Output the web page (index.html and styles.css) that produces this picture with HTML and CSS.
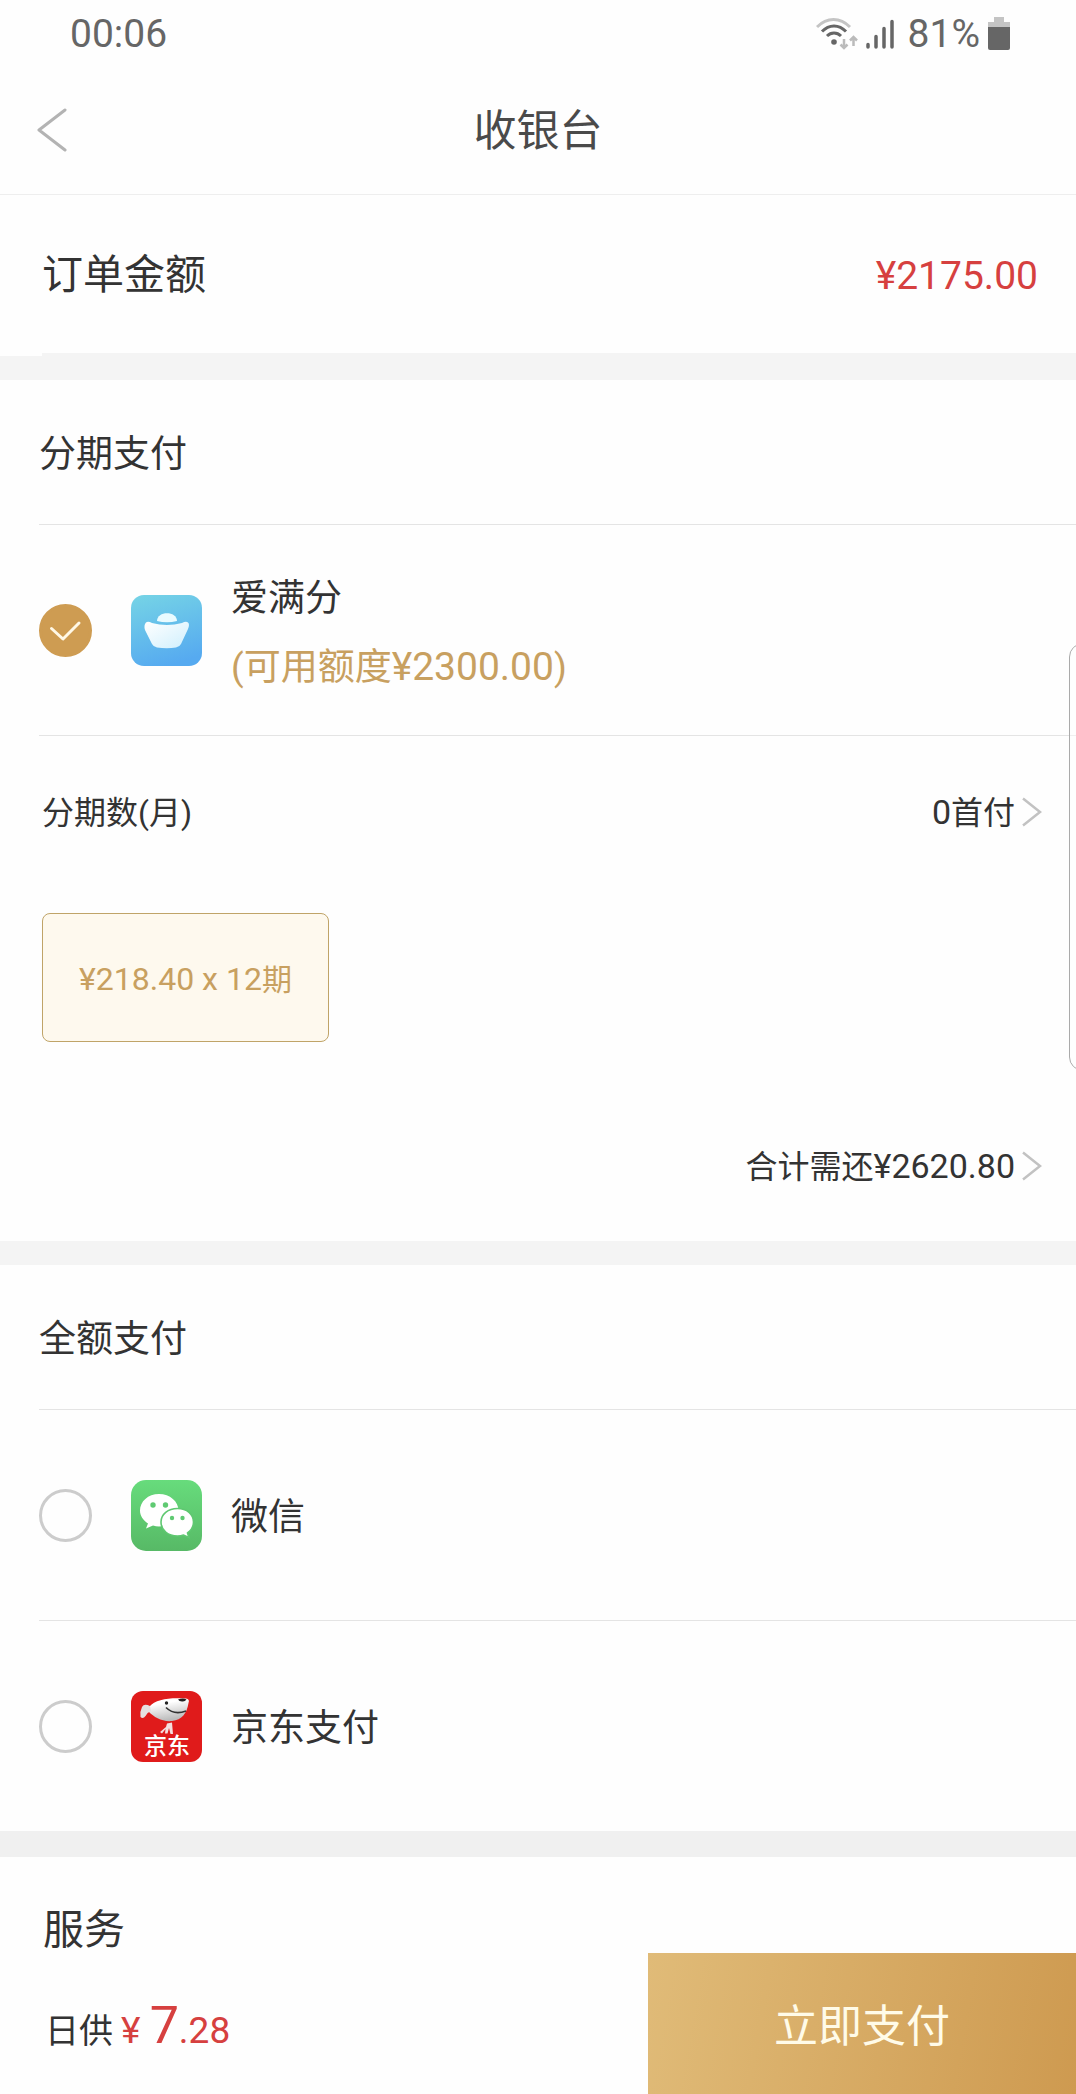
FILE: index.html
```html
<!DOCTYPE html>
<html lang="zh-CN">
<head>
  <meta charset="utf-8">
  <meta name="viewport" content="width=device-width, initial-scale=1">
  <title>收银台</title>
  <link rel="stylesheet" href="styles.css">
</head>
<body>
  <div class="page">
    <!-- Status Bar -->
    <div class="status-bar">
      <span>00:06</span>
      <div class="status-icons">
        <svg width="42" height="34" viewBox="0 0 42 34" fill="none" stroke="#666" stroke-width="3">
          <path d="M1 10C11 0 24 0 34 10" stroke="#c4c4c4"/>
          <path d="M6 14.500C13 7 23 7 30 14.500"/>
          <path d="M11 19C15 15 21 15 25 19"/>
          <circle cx="18" cy="25" r="2.800" fill="#666" stroke="none"/>
          <path d="M28 22V31M24.500 27.500L28 31L31.500 27.500M37.500 29V20M34 23.500L37.500 20L41 23.500" stroke="#bbb" stroke-width="2.500"/>
        </svg>
        <svg class="signal-icon" width="28" height="34" viewBox="0 0 28 34" stroke="#666" stroke-width="3.500" stroke-linecap="round">
          <path d="M2 27.500V30M10 19.500V30M18 11.500V30M26 4.500V30"/>
        </svg>
        <span>81%</span>
        <svg class="battery-icon" width="22" height="34" viewBox="0 0 22 34">
          <path d="M6 0H16V5H22V11H0V5H6Z" fill="#c4c4c4"/>
          <path d="M0 10H22V31Q22 33 20 33H2Q0 33 0 31Z" fill="#666"/>
        </svg>
      </div>
    </div>

    <!-- Header -->
    <header class="header">
      <button class="back-btn" type="button" aria-label="返回">
        <svg width="30" height="44" viewBox="0 0 30 44" fill="none" stroke="#b3b3b3" stroke-width="3" stroke-linecap="round" stroke-linejoin="round">
          <path d="M28 2L2 22L28 42"/>
        </svg>
      </button>
      <h1>收银台</h1>
    </header>

    <!-- Order Amount -->
    <section class="order">
      <div class="order-row">
        <span class="order-label">订单金额</span>
        <span class="order-amount">¥2175.00</span>
      </div>
    </section>

    <!-- Installment Payment -->
    <section class="card">
      <h2>分期支付</h2>
      <label class="pay-row">
        <span class="radio">
          <input type="radio" name="pay" checked>
          <svg viewBox="0 0 53 53" fill="none" stroke="#fff8e6" stroke-width="3" stroke-linecap="round" stroke-linejoin="round">
            <path d="M12.500 24.500L24 35L40 19"/>
          </svg>
        </span>
        <svg class="pay-icon" viewBox="0 0 71 71">
          <defs>
            <linearGradient id="sky" x1="0.200" y1="0" x2="0.500" y2="1">
              <stop offset="0" stop-color="#74d2e6"/>
              <stop offset="1" stop-color="#56aaf0"/>
            </linearGradient>
            <linearGradient id="ingot" x1="0" y1="0" x2="1" y2="1">
              <stop offset="0" stop-color="#fff"/>
              <stop offset="1" stop-color="#cfeffd"/>
            </linearGradient>
          </defs>
          <rect width="71" height="71" rx="13" fill="url(#sky)"/>
          <path d="M26 26C26 15.500 46 15.500 46 26Q36 28.500 26 26Z" fill="#e9fbff"/>
          <path d="M15 27.500Q17 26 21 28Q36 32 51 28Q55 26 57 27.500Q59 29 57 34L50 49Q48.500 52 45 52.500Q36 54 26 52.500Q22.500 52 21 49L14 35Q12.500 30 15 27.500Z" fill="url(#ingot)"/>
        </svg>
        <span class="pay-text">
          <span>爱满分</span>
          <span class="quota">(可用额度<span class="num">¥2300.00</span>)</span>
        </span>
      </label>

      <div class="plan">
        <div class="plan-row">
          <span class="plan-text">分期数(月)</span>
          <button class="link-btn" type="button">
            <span class="plan-text"><span class="num">0</span>首付</span>
            <svg width="20" height="30" viewBox="0 0 20 30" fill="none" stroke="#c2c2c2" stroke-width="2.500">
              <path d="M1 1.500L18 15L1 28.500"/>
            </svg>
          </button>
        </div>
        <button class="plan-option" type="button"><span class="num">¥218.40 x 12</span>期</button>
        <div class="plan-row plan-total">
          <button class="link-btn" type="button">
            <span class="plan-text">合计需还<span class="num">¥2620.80</span></span>
            <svg width="20" height="30" viewBox="0 0 20 30" fill="none" stroke="#c2c2c2" stroke-width="2.500">
              <path d="M1 1.500L18 15L1 28.500"/>
            </svg>
          </button>
        </div>
      </div>
    </section>

    <!-- Full Payment -->
    <section class="card card-full">
      <h2>全额支付</h2>
      <label class="pay-row">
        <span class="radio"><input type="radio" name="pay"></span>
        <svg class="pay-icon" viewBox="0 0 71 71">
          <defs>
            <linearGradient id="green" x1="0" y1="0" x2="0" y2="1">
              <stop offset="0" stop-color="#67dc7c"/>
              <stop offset="1" stop-color="#57b966"/>
            </linearGradient>
          </defs>
          <rect width="71" height="71" rx="15" fill="url(#green)"/>
          <path d="M28 14C17 14 9 21.500 9 30.500C9 36 12 40 17 43.500L15 48.500L22 45.500Q25 46.500 28 46.500C39 46.500 47.500 39.500 47.500 30.500C47.500 21.500 39 14 28 14Z" fill="#fff"/>
          <path d="M46.500 28.500C37 28.500 30 34.500 30 42C30 50 37 56 46.500 56Q50 56 52.500 55L58 57.500L56.500 53C60 50.500 62.500 46.500 62.500 42C62.500 34.500 56 28.500 46.500 28.500Z" fill="#fff" stroke="#5fc871" stroke-width="1.600"/>
          <g fill="#5fca72">
            <circle cx="22" cy="25" r="2.700"/>
            <circle cx="34.500" cy="25" r="2.700"/>
            <circle cx="41" cy="38" r="2.200"/>
            <circle cx="51.500" cy="38" r="2.200"/>
          </g>
        </svg>
        <span class="pay-text">微信</span>
      </label>
      <label class="pay-row">
        <span class="radio"><input type="radio" name="pay"></span>
        <svg class="pay-icon" viewBox="0 0 71 71">
          <defs>
            <linearGradient id="dog" x1="0" y1="0" x2="0.300" y2="1">
              <stop offset="0.300" stop-color="#fff"/>
              <stop offset="1" stop-color="#bcbcbc"/>
            </linearGradient>
          </defs>
          <rect width="71" height="71" rx="12" fill="#e01b1b"/>
          <path d="M18 16C25 8 38 6.500 55 7.500Q59 8 57.500 12C56 22 51 29 41 30C31 31 23 26 18 21Z" fill="url(#dog)"/>
          <path d="M19 15Q13 12 11 16Q8.500 21 9.500 26Q12 28.500 14.500 25Q16 21.500 20 20Z" fill="#e6e0e0"/>
          <path d="M47 8.500Q52 6.500 55.500 8.500Q54 11 51 10.500Q48 10.500 47 8.500Z" fill="#222"/>
          <circle cx="35.500" cy="12" r="1.700" fill="#222"/>
          <path d="M35 16.500Q43 24.500 55 20" fill="none" stroke="#333" stroke-width="1.600"/>
          <path d="M36 32.500L41 31.500L42 43H39.500L38 37L36.500 42.500H34L34.500 38L31 42.500L29 41L35 36Z" fill="#f4dede"/>
          <text class="jd-text" x="36" y="63" text-anchor="middle">京东</text>
        </svg>
        <span class="pay-text">京东支付</span>
      </label>
    </section>

    <!-- Services -->
    <section class="service">服务</section>

    <!-- Bottom Bar -->
    <footer class="bottom-bar">
      <div class="daily">
        <span>日供</span>
        <span class="daily-price">¥ <b>7</b>.28</span>
      </div>
      <button class="pay-btn" type="button">立即支付</button>
    </footer>
  </div>

  <!-- Edge Panel Handle -->
  <div class="edge-handle"></div>
</body>
</html>
```
FILE: styles.css
```css
* {
  box-sizing: border-box;
}

body {
  margin: 0;
  background: #fefefe;
  color: #333;
  font-family: Roboto, 'Noto Sans CJK SC', sans-serif;
  font-size: 37px;
}

button {
  padding: 0;
  border: none;
  background: none;
  color: inherit;
  font-family: inherit;
  cursor: pointer;
}

svg {
  display: block;
}

h1,
h2 {
  margin: 0;
  font-weight: 400;
}

.page {
  display: flex;
  flex-direction: column;
  min-height: 100vh;
}

/* Status Bar */
.status-bar {
  display: flex;
  align-items: center;
  justify-content: space-between;
  height: 66px;
  padding: 2px 66px 0 70px;
  color: #666;
  font-size: 39px;
}

.status-icons {
  display: flex;
  align-items: center;
}

.signal-icon {
  margin: 0 14px 0 8px;
}

.battery-icon {
  margin-left: 8px;
}

/* Header */
.header {
  display: grid;
  grid-template-columns: 1fr auto 1fr;
  align-items: center;
  height: 129px;
  padding: 0 37px;
  border-bottom: 1px solid #eee;
}

.back-btn {
  justify-self: start;
}

.header h1 {
  padding-bottom: 6px;
  color: #4a4a4a;
  font-size: 43px;
}

/* Order Amount */
.order {
  padding-left: 42px;
  border-bottom: 24px solid #f4f4f4;
}

.order-row {
  display: flex;
  align-items: center;
  justify-content: space-between;
  height: 161px;
  padding-right: 38px;
  border-bottom: 3px solid #f4f4f4;
}

.order-label {
  padding-bottom: 6px;
  font-size: 41px;
}

.order-amount {
  padding-top: 4px;
  color: #d6403f;
  font-size: 39px;
}

/* Payment Cards */
.card {
  padding-left: 39px;
  border-bottom: 24px solid #f4f4f4;
}

.card-full {
  border-bottom: 26px solid #f0f0f0;
}

.card h2 {
  height: 144px;
  padding-top: 6px;
  font-size: 37px;
  line-height: 138px;
}

.pay-row {
  display: flex;
  align-items: center;
  height: 211px;
  border-top: 1px solid #e4e4e4;
  cursor: pointer;
}

.radio {
  position: relative;
  width: 53px;
  height: 53px;
  margin-right: 39px;
}

.radio input {
  display: block;
  width: 53px;
  height: 53px;
  margin: 0;
  appearance: none;
  border: 3px solid #ccc;
  border-radius: 50%;
}

.radio input:checked {
  border-color: #ce9c52;
  background: #ce9c52;
}

.radio svg {
  position: absolute;
  inset: 0;
}

.pay-icon {
  width: 71px;
  height: 71px;
  margin-right: 29px;
}

.pay-text {
  display: flex;
  flex-direction: column;
  padding-top: 6px;
  line-height: 68px;
}

.quota {
  color: #c8a060;
}

.quota .num {
  font-size: 39px;
}

.jd-text {
  fill: #fff;
  font-family: 'Noto Sans CJK SC', sans-serif;
  font-size: 23px;
  font-weight: 500;
}

/* Installment Plan */
.plan {
  padding: 0 34px 37px 3px;
  border-top: 1px solid #e4e4e4;
  font-size: 32px;
}

.plan .num {
  font-size: 34px;
}

.plan-row {
  display: flex;
  align-items: center;
  justify-content: space-between;
  height: 76px;
  margin: 38px 0 63px;
}

.plan-total {
  justify-content: flex-end;
  margin: 86px 0 0;
}

.plan-text {
  padding-bottom: 5px;
}

.link-btn {
  display: flex;
  align-items: center;
  gap: 7px;
  font-size: 32px;
}

.plan-option {
  display: block;
  height: 129px;
  padding: 0 36px 2px;
  border: 1px solid #c0a468;
  border-radius: 8px;
  background: #fef9ee;
  color: #c8a060;
  font-size: 30px;
}

.plan .plan-option .num {
  font-size: 32px;
}

/* Services */
.service {
  padding: 50px 43px 0;
  font-size: 41px;
  line-height: 46px;
}

/* Bottom Bar */
.bottom-bar {
  position: sticky;
  bottom: 0;
  display: flex;
  flex-shrink: 0;
  height: 141px;
  margin-top: auto;
  background: #fefefe;
}

.daily {
  display: flex;
  flex: 1;
  align-items: baseline;
  gap: 8px;
  padding: 42px 0 0 45px;
  font-size: 34px;
}

.daily-price {
  color: #d6403f;
  font-size: 37px;
}

.daily-price b {
  font-size: 52px;
  font-weight: 400;
}

.pay-btn {
  width: 428px;
  padding-bottom: 2px;
  background: linear-gradient(100deg, #e0bb78, #ce9a50);
  color: #fffbe8;
  font-size: 44px;
}

/* Edge Panel Handle */
.edge-handle {
  position: fixed;
  top: 643px;
  right: -24px;
  width: 31px;
  height: 428px;
  border: 1px solid #aaa;
  border-radius: 14px;
  background: rgba(255, 255, 255, 0.4);
}
```
